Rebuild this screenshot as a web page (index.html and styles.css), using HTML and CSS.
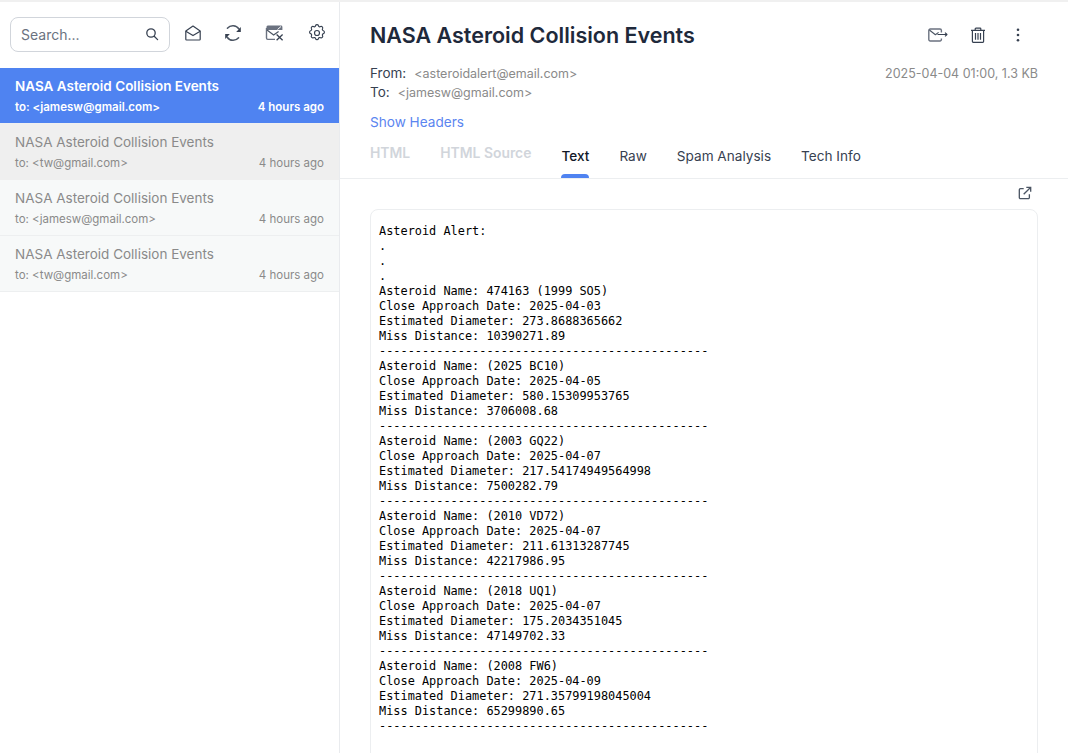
FILE: index.html
```html
<!DOCTYPE html>
<html lang="en">

<head>
    <meta charset="UTF-8">
    <meta name="viewport" content="width=device-width, initial-scale=1.0">
    <title>NASA Asteroid Collision Events</title>
    <link rel="stylesheet" href="styles.css">
</head>

<body>
    <div class="app">
        <aside class="sidebar">
            <div class="toolbar">
                <div class="search">
                    <span class="search-text">Search...</span>
                    <svg class="search-icon" width="14" height="14" viewBox="0 0 14 14" fill="none" stroke="#374151" stroke-width="1.3">
                        <circle cx="6" cy="6" r="4.2"></circle>
                        <path d="M9.2 9.2L12.6 12.6" stroke-linecap="round"></path>
                    </svg>
                </div>
                <div class="tool-icons">
                    <svg width="18" height="18" viewBox="0 0 18 18" fill="none" stroke="#374151" stroke-width="1.2" stroke-linejoin="round">
                        <path d="M1.8 7L9 2l7.2 5v8.2a.8.8 0 0 1-.8.8H2.6a.8.8 0 0 1-.8-.8z"></path>
                        <path d="M1.8 7.2L9 11.6l7.2-4.4"></path>
                    </svg>
                    <svg width="18" height="18" viewBox="0 0 18 18" fill="none" stroke="#4b5563" stroke-width="1.5" stroke-linecap="round">
                        <path d="M3.4 4.2A7.2 7.2 0 0 1 14.8 4.8"></path>
                        <path d="M14.6 13.8A7.2 7.2 0 0 1 3.2 13.2"></path>
                        <path d="M16.8 3v5h-4.6z" fill="#374151" stroke="none"></path>
                        <path d="M1.2 15v-5h4.6z" fill="#374151" stroke="none"></path>
                    </svg>
                    <svg width="20" height="18" viewBox="0 0 20 18" fill="none">
                        <path d="M3 1.5h13a1.4 1.4 0 0 1 1.4 1.4V6H1.5V3A1.4 1.4 0 0 1 3 1.5z" fill="#6b7280"></path>
                        <path d="M10 15.4H2.8a1.3 1.3 0 0 1-1.3-1.3V4" stroke="#6b7280" stroke-width="1.4"></path>
                        <path d="M2 6l6.6 5 5-3.6" stroke="#4b5563" stroke-width="1.2"></path>
                        <path d="M11.6 10.6l6 5.6M17.6 10.6l-6 5.6" stroke="#374151" stroke-width="1.3"></path>
                        <path d="M12.5 5.5l3.5-3" stroke="#fff" stroke-width="1"></path>
                    </svg>
                    <svg width="20" height="20" viewBox="0 0 24 24" fill="none" stroke="#374151" stroke-width="1.4" stroke-linejoin="round">
                        <path d="M10.3 3.2c.4-1.6 3-1.6 3.4 0a1.7 1.7 0 0 0 2.6 1.1c1.4-.9 3.2.9 2.4 2.4a1.7 1.7 0 0 0 1 2.6c1.6.4 1.6 3 0 3.4a1.7 1.7 0 0 0-1 2.6c.8 1.4-1 3.2-2.4 2.4a1.7 1.7 0 0 0-2.6 1c-.4 1.7-3 1.7-3.4 0a1.7 1.7 0 0 0-2.6-1c-1.4.8-3.2-1-2.4-2.4a1.7 1.7 0 0 0-1-2.6c-1.6-.4-1.6-3 0-3.4a1.7 1.7 0 0 0 1-2.6c-.8-1.5 1-3.3 2.4-2.4a1.7 1.7 0 0 0 2.6-1.1z"></path>
                        <circle cx="12" cy="12" r="3"></circle>
                    </svg>
                </div>
            </div>
            <ul class="mail-list">
                <li class="mail-item selected">
                    <div class="mail-subject">NASA Asteroid Collision Events</div>
                    <div class="mail-meta"><span>to: &lt;jamesw@gmail.com&gt;</span><span>4 hours ago</span></div>
                </li>
                <li class="mail-item hovered">
                    <div class="mail-subject">NASA Asteroid Collision Events</div>
                    <div class="mail-meta"><span>to: &lt;tw@gmail.com&gt;</span><span>4 hours ago</span></div>
                </li>
                <li class="mail-item">
                    <div class="mail-subject">NASA Asteroid Collision Events</div>
                    <div class="mail-meta"><span>to: &lt;jamesw@gmail.com&gt;</span><span>4 hours ago</span></div>
                </li>
                <li class="mail-item">
                    <div class="mail-subject">NASA Asteroid Collision Events</div>
                    <div class="mail-meta"><span>to: &lt;tw@gmail.com&gt;</span><span>4 hours ago</span></div>
                </li>
            </ul>
        </aside>

        <main class="content">
            <header class="mail-header">
                <div class="title-row">
                    <h1>NASA Asteroid Collision Events</h1>
                    <div class="mail-actions">
                        <svg width="20" height="14" viewBox="0 0 20 14" fill="none" stroke="#6b7280" stroke-width="1.4" stroke-linejoin="round">
                            <path d="M13.4 10.5v1.1a1.4 1.4 0 0 1-1.4 1.4H2.2a1.4 1.4 0 0 1-1.4-1.4V2.4A1.4 1.4 0 0 1 2.2 1H12a1.4 1.4 0 0 1 1.4 1.4v2.1"></path>
                            <path d="M1.4 2l6 4.8 3.2-2.4" stroke="#4b5563" stroke-width="1.1"></path>
                            <path d="M9.5 6.500h9.500M17 4.700l2 1.800-2 1.800" stroke="#374151" stroke-width="1.1"></path>
                        </svg>
                        <svg width="16" height="16" viewBox="0 0 16 16" fill="none" stroke="#374151" stroke-width="1.2" stroke-linejoin="round">
                            <path d="M1 3.4h14M5.2 3.4V1.8a.7.7 0 0 1 .7-.7h4.200a.7.7 0 0 1 .7.7v1.600"></path>
                            <path d="M2.400 3.400v10.800a1.200 1.200 0 0 0 1.200 1.200h8.800a1.200 1.200 0 0 0 1.200-1.200V3.400"></path>
                            <path d="M5.500 6v6.800M8 6v6.800M10.500 6v6.800"></path>
                        </svg>
                        <svg class="more-icon" width="4" height="14" viewBox="0 0 4 14" fill="#374151">
                            <circle cx="2" cy="1.8" r="1.3"></circle>
                            <circle cx="2" cy="7" r="1.3"></circle>
                            <circle cx="2" cy="12.2" r="1.3"></circle>
                        </svg>
                    </div>
                </div>
                <div class="address-row">
                    <div class="addresses">
                        <div><span class="address-label">From:</span><span class="address">&lt;asteroidalert@email.com&gt;</span></div>
                        <div><span class="address-label">To:</span><span class="address">&lt;jamesw@gmail.com&gt;</span></div>
                    </div>
                    <div class="mail-date">2025-04-04 01:00, 1.3 KB</div>
                </div>
                <a class="show-headers" href="#">Show Headers</a>
                <nav class="tabs">
                    <span class="tab disabled">HTML</span>
                    <span class="tab disabled">HTML Source</span>
                    <span class="tab active">Text</span>
                    <span class="tab">Raw</span>
                    <span class="tab">Spam Analysis</span>
                    <span class="tab">Tech Info</span>
                </nav>
            </header>
            <div class="open-row">
                <svg width="14" height="14" viewBox="0 0 16 16" fill="none" stroke="#4b5563" stroke-width="1.5">
                    <path d="M6.5 3H2.8A1.3 1.3 0 0 0 1.5 4.3v8.9a1.3 1.3 0 0 0 1.3 1.3h8.900a1.300 1.300 0 0 0 1.300-1.300V9.500"></path>
                    <path d="M6.500 9.500L14.300 1.700M9.500 1.500h5v5"></path>
                </svg>
            </div>
            <pre class="mail-body">Asteroid Alert:
.
.
.
Asteroid Name: 474163 (1999 SO5)
Close Approach Date: 2025-04-03
Estimated Diameter: 273.8688365662
Miss Distance: 10390271.89
----------------------------------------------
Asteroid Name: (2025 BC10)
Close Approach Date: 2025-04-05
Estimated Diameter: 580.15309953765
Miss Distance: 3706008.68
----------------------------------------------
Asteroid Name: (2003 GQ22)
Close Approach Date: 2025-04-07
Estimated Diameter: 217.54174949564998
Miss Distance: 7500282.79
----------------------------------------------
Asteroid Name: (2010 VD72)
Close Approach Date: 2025-04-07
Estimated Diameter: 211.61313287745
Miss Distance: 42217986.95
----------------------------------------------
Asteroid Name: (2018 UQ1)
Close Approach Date: 2025-04-07
Estimated Diameter: 175.2034351045
Miss Distance: 47149702.33
----------------------------------------------
Asteroid Name: (2008 FW6)
Close Approach Date: 2025-04-09
Estimated Diameter: 271.35799198045004
Miss Distance: 65299890.65
----------------------------------------------</pre>
        </main>
    </div>
</body>

</html>
```

FILE: styles.css
```css
* {
    box-sizing: border-box;
}

html,
body {
    height: 100%;
}

body {
    margin: 0;
    overflow: hidden;
    background-color: #fff;
    font-family: Inter, "Noto Sans", sans-serif;
    color: #1f2937;
}

.app {
    display: flex;
    height: 753px;
    overflow: hidden;
    border-top: 2px solid #f0f0f0;
}

/* left column */
.sidebar {
    width: 340px;
    flex-shrink: 0;
    border-right: 1px solid #e9ebee;
}

.toolbar {
    display: flex;
    align-items: center;
    height: 66px;
    padding: 0 12px 2px 10px;
}

.search {
    display: flex;
    align-items: center;
    justify-content: space-between;
    width: 160px;
    height: 35px;
    padding: 0 10px;
    border: 1px solid #d1d5db;
    border-radius: 8px;
}

.search-text {
    font-size: 14px;
    color: #6b7280;
}

.tool-icons {
    display: flex;
    flex: 1;
    align-items: center;
    justify-content: space-between;
    padding-left: 14px;
    padding-bottom: 2px;
}

.mail-list {
    margin: 0;
    padding: 0;
    list-style: none;
}

.mail-item {
    height: 56px;
    padding: 9px 15px 0;
    border-bottom: 1px solid #edeff0;
    background-color: #f7f9f9;
    color: #8a8a8a;
}

.mail-item.selected {
    background-color: #4f83f1;
    color: #fff;
    font-weight: 600;
    border-bottom: 1px solid #f0f0f0;
}

.mail-item.hovered {
    background-color: #efefef;
    border-bottom: none;
}

.mail-subject {
    font-size: 13.5px;
    line-height: 19px;
}

.mail-meta {
    display: flex;
    justify-content: space-between;
    margin-top: 2px;
    font-size: 11.5px;
    line-height: 18px;
}

/* right column */
.content {
    flex: 1;
    min-width: 0;
    padding: 0 30px;
}

.title-row {
    display: flex;
    align-items: flex-start;
    justify-content: space-between;
    height: 62px;
    padding-top: 20px;
}

h1 {
    margin: 0;
    font-size: 21.5px;
    line-height: 26px;
    font-weight: 600;
    color: #1e293b;
}

.mail-actions {
    display: flex;
    gap: 22px;
    align-items: center;
    height: 26px;
    padding-right: 18px;
}

.more-icon {
    margin-left: 8px;
}

.address-row {
    display: flex;
    justify-content: space-between;
    font-size: 12.5px;
    line-height: 19px;
}

.address-label {
    margin-right: 8px;
    font-size: 13.5px;
    color: #374151;
}

.address {
    color: #8a8a8a;
}

.mail-date {
    color: #8a8a8a;
}

.show-headers {
    display: block;
    margin-top: 11px;
    font-size: 13.6px;
    line-height: 19px;
    color: #5b85f0;
    text-decoration: none;
}

.tabs {
    display: flex;
    gap: 30px;
    height: 47px;
    margin: 0 -30px;
    padding: 0 30px;
    border-bottom: 1px solid #eceef0;
    font-size: 13.6px;
}

.tab {
    position: relative;
    padding-top: 16px;
    color: #374151;
}

.tab.disabled {
    padding-top: 13px;
    font-size: 13.9px;
    color: #d1d5db;
    font-weight: 600;
}

.tab.active {
    color: #111827;
    font-weight: 500;
}

.tab.active::after {
    content: "";
    position: absolute;
    left: 0;
    right: 0;
    bottom: 0;
    height: 4px;
    border-radius: 4px 4px 0 0;
    background-color: #4f83f1;
}

.open-row {
    display: flex;
    justify-content: flex-end;
    height: 30px;
    padding-top: 7px;
    padding-right: 6px;
}

.mail-body {
    height: 600px;
    margin: 0;
    padding: 14px 8px;
    border: 1px solid #eceef0;
    border-radius: 8px;
    font-family: "DejaVu Sans Mono", monospace;
    font-size: 11.9px;
    line-height: 15px;
    color: #000;
}
```
